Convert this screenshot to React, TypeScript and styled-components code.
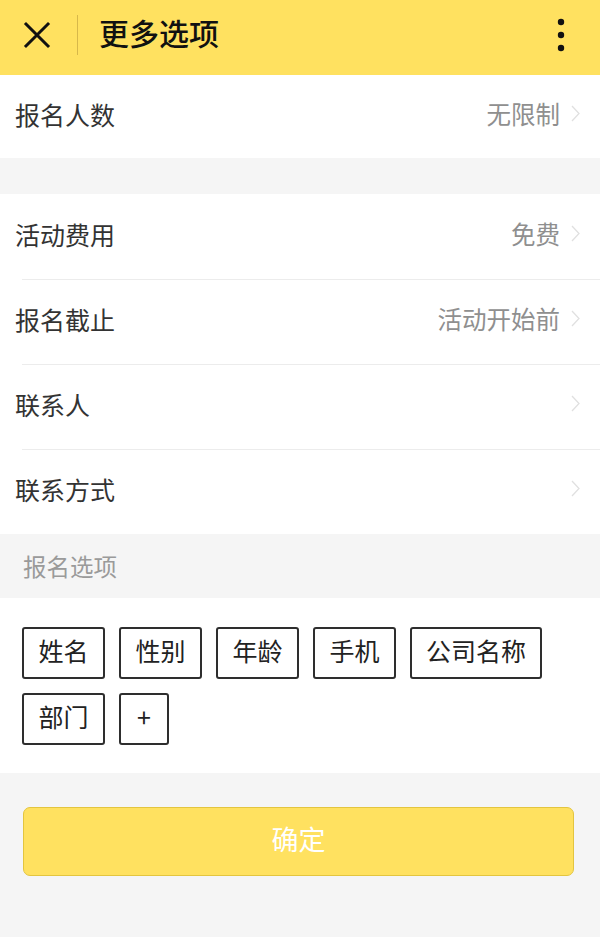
import React from 'react'
import styled, { createGlobalStyle } from 'styled-components'

const GlobalStyle = createGlobalStyle`
    html, body {
        margin: 0;
        padding: 0;
        background: #f5f5f5;
    }
    body {
        font-family: "Noto Sans CJK SC", "Noto Sans", sans-serif;
    }
`

const Page = styled.div`
    width: 600px;
    min-height: 937px;
    background: #f5f5f5;
`

const Header = styled.header`
    height: 75px;
    background: #ffe160;
    display: flex;
    align-items: center;
    padding: 0 0 5px 22px;
    box-sizing: border-box;
`

const Divider = styled.span`
    width: 1px;
    height: 40px;
    background: #d7b84a;
    margin: 0 21px 0 25px;
`

const Title = styled.h1`
    flex: 1;
    margin: 0;
    padding-bottom: 6px;
    font-size: 30px;
    font-weight: 500;
    color: #111;
`

const MenuButton = styled.div`
    width: 78px;
    display: flex;
    justify-content: center;
`

const Group = styled.section<{ gap?: number }>`
    background: #fff;
    margin-bottom: ${(p) => p.gap ?? 0}px;
`

const Row = styled.div<{ h?: number }>`
    height: ${(p) => p.h ?? 85}px;
    box-sizing: border-box;
    display: flex;
    align-items: center;
    padding: 0 20px 6px 15px;
    position: relative;
    & + &::before {
        content: '';
        position: absolute;
        top: 0;
        left: 22px;
        right: 0;
        height: 1px;
        background: #ececec;
    }
`

const Label = styled.span`
    flex: 1;
    font-size: 25px;
    color: #333;
`

const Value = styled.span`
    font-size: 24.5px;
    color: #8f8f8f;
    margin-right: 11px;
`

const SectionTitle = styled.div`
    height: 64px;
    box-sizing: border-box;
    display: flex;
    align-items: center;
    padding: 0 0 0 23px;
    font-size: 23.5px;
    color: #9a9a9a;
`

const Tags = styled.div`
    background: #fff;
    padding: 29px 22px 28px;
    display: flex;
    flex-wrap: wrap;
    gap: 14px;
`

const Tag = styled.span<{ narrow?: boolean }>`
    height: 52px;
    box-sizing: border-box;
    min-width: ${(p) => (p.narrow ? 50 : 83)}px;
    padding: 0 14px 6px;
    border: 2px solid #2e2e2e;
    border-radius: 3px;
    display: flex;
    align-items: center;
    justify-content: center;
    font-size: 25px;
    color: #222;
`

const Footer = styled.div`
    padding: 34px 26px 0 23px;
`

const Confirm = styled.button`
    width: 100%;
    height: 69px;
    padding: 0 0 6px;
    background: #ffe160;
    border: 1.5px solid #e3c53f;
    border-radius: 7px;
    color: #fff;
    font-family: inherit;
    font-size: 27px;
`

const CloseIcon = () => (
    <svg width="30" height="30" viewBox="0 0 30 30">
        <path d="M4 4L26 26M26 4L4 26" stroke="#111" strokeWidth="3" strokeLinecap="square" />
    </svg>
)

const MoreIcon = () => (
    <svg width="8" height="34" viewBox="0 0 8 34">
        <circle cx="4" cy="4" r="3.2" fill="#111" />
        <circle cx="4" cy="17" r="3.2" fill="#111" />
        <circle cx="4" cy="30" r="3.2" fill="#111" />
    </svg>
)

const Chevron = () => (
    <svg width="9" height="17" viewBox="0 0 9 17">
        <path d="M1 1L8 8.5L1 16" fill="none" stroke="#e0e0e0" strokeWidth="1.3" />
    </svg>
)

const items = [
    { label: '活动费用', value: '免费' },
    { label: '报名截止', value: '活动开始前' },
    { label: '联系人', value: '' },
    { label: '联系方式', value: '' },
]

const tags = ['姓名', '性别', '年龄', '手机', '公司名称', '部门']

export default function App() {
    return (
        <Page>
            <GlobalStyle />
            <Header>
                <CloseIcon />
                <Divider />
                <Title>更多选项</Title>
                <MenuButton>
                    <MoreIcon />
                </MenuButton>
            </Header>
            <Group gap={36}>
                <Row h={83}>
                    <Label>报名人数</Label>
                    <Value>无限制</Value>
                    <Chevron />
                </Row>
            </Group>
            <Group>
                {items.map((it) => (
                    <Row key={it.label}>
                        <Label>{it.label}</Label>
                        {it.value && <Value>{it.value}</Value>}
                        <Chevron />
                    </Row>
                ))}
            </Group>
            <SectionTitle>报名选项</SectionTitle>
            <Tags>
                {tags.map((t) => (
                    <Tag key={t}>{t}</Tag>
                ))}
                <Tag narrow>+</Tag>
            </Tags>
            <Footer>
                <Confirm>确定</Confirm>
            </Footer>
        </Page>
    )
}
